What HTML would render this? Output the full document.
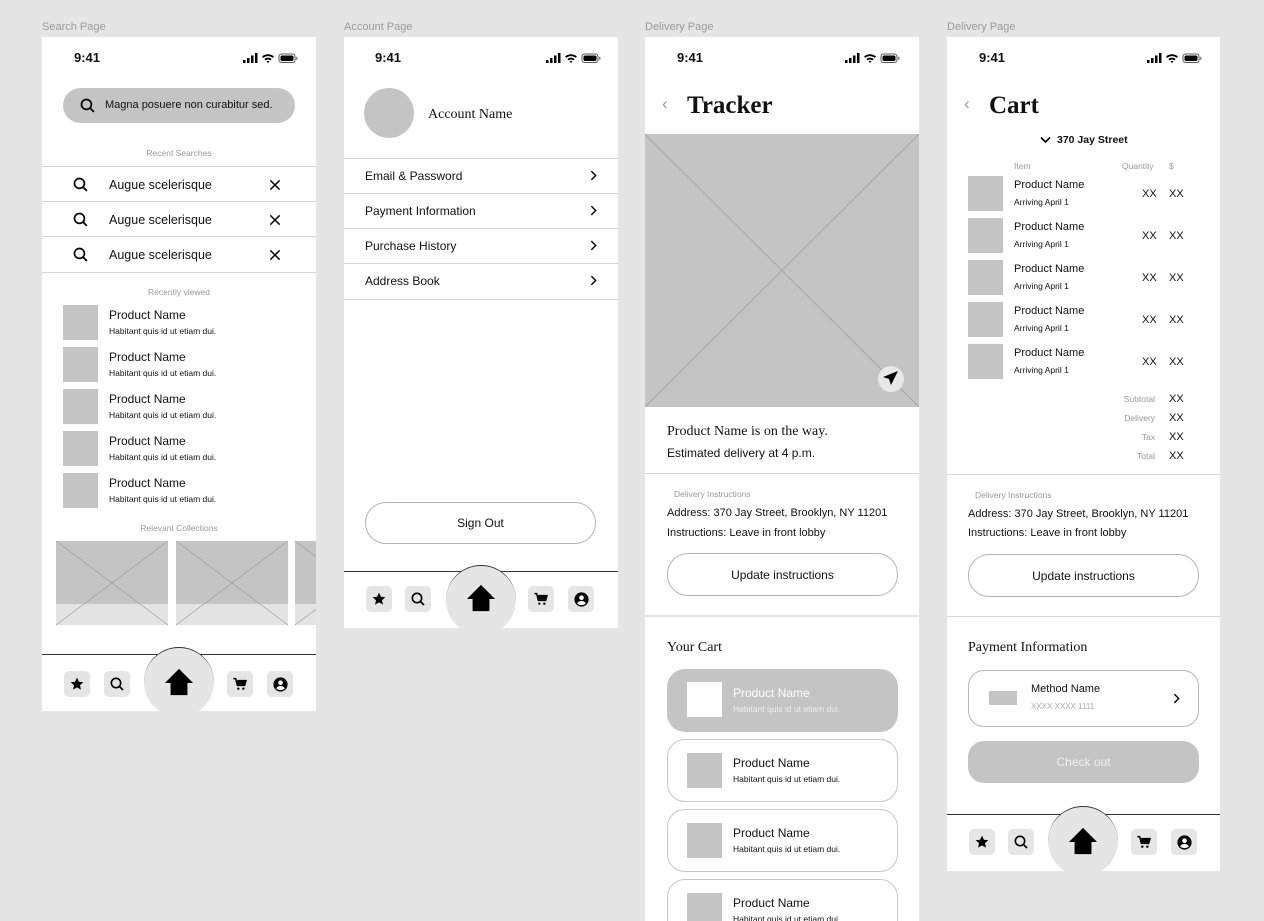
<!DOCTYPE html>
<html><head><meta charset="utf-8"><style>
*{margin:0;padding:0;box-sizing:border-box}
body{width:1264px;height:921px;background:#e5e5e5;position:relative;overflow:hidden;font-family:"Liberation Sans",sans-serif;color:#111}
.a{position:absolute}
.f{position:absolute;background:#fff;overflow:hidden}
.t{position:absolute;white-space:nowrap;line-height:1}
.lbl{position:absolute;font-size:11px;color:#9a9a9a;line-height:1}
.g{color:#999}
.sr{font-family:"Liberation Serif",serif}
.hl{position:absolute;height:1px;background:#d6d6d6}
.th{position:absolute;background:#c4c4c4;width:35px;height:35px}
.btn{position:absolute;border:1px solid #b5b5b5;border-radius:21px;display:flex;align-items:center;justify-content:center;font-size:12px}
.ib{position:absolute;width:26px;height:26px;background:#e5e5e5;border-radius:5px;display:flex;align-items:center;justify-content:center}
.circ{position:absolute;width:70px;height:70px;border-radius:50%;background:#e5e5e5;border-top:1px solid #333;display:flex;align-items:center;justify-content:center}
.nl{position:absolute;height:1px;background:#333}
</style></head><body>

<svg width="0" height="0" style="position:absolute">
<defs>
<symbol id="star" viewBox="0 0 24 24"><path d="M12 2.5l2.9 6.1 6.6.7-5 4.5 1.4 6.6L12 17l-5.9 3.4 1.4-6.6-5-4.5 6.6-.7z" fill="#000"/></symbol>
<symbol id="srch" viewBox="0 0 24 24"><circle cx="10.5" cy="10.5" r="7" fill="none" stroke="#000" stroke-width="2.4"/><path d="M15.5 15.5l5.5 5.5" stroke="#000" stroke-width="2.6"/></symbol>
<symbol id="cart" viewBox="0 0 24 24"><path d="M2 4h3.5l2.5 10h11l2-7H8" fill="none" stroke="#000" stroke-width="2.2"/><rect x="7.5" y="7" width="12" height="6" fill="#000"/><circle cx="9.5" cy="19" r="1.8" fill="#000"/><circle cx="17" cy="19" r="1.8" fill="#000"/></symbol>
<symbol id="user" viewBox="0 0 24 24"><circle cx="12" cy="12" r="10" fill="#000"/><circle cx="12" cy="9.5" r="3.3" fill="#fff"/><path d="M5.8 17.5c1.5-2.6 3.6-3.4 6.2-3.4s4.7.8 6.2 3.4c-1.6 1.6-3.8 2.5-6.2 2.5s-4.6-.9-6.2-2.5z" fill="#fff"/></symbol>
<symbol id="home" viewBox="0 0 32 32"><path d="M16 2L1 17h6v13h18V17h6z" fill="#000"/></symbol>
<symbol id="x" viewBox="0 0 24 24"><path d="M5 5l14 14M19 5L5 19" stroke="#000" stroke-width="2.2"/></symbol>
<symbol id="chev" viewBox="0 0 24 24"><path d="M8 4l8 8-8 8" fill="none" stroke="#000" stroke-width="2.6"/></symbol>
<symbol id="status" viewBox="0 0 56 12"><rect x="0" y="8" width="2.5" height="3" fill="#000"/><rect x="4" y="6" width="2.5" height="5" fill="#000"/><rect x="8" y="3.5" width="2.5" height="7.5" fill="#000"/><rect x="12" y="1" width="2.5" height="10" fill="#000"/><path d="M19 4.5a9 9 0 0 1 12 0l-1.3 1.4a7 7 0 0 0-9.4 0z M21.3 7a5.5 5.5 0 0 1 7.4 0l-1.3 1.4a3.6 3.6 0 0 0-4.8 0z M23.6 9.5a2 2 0 0 1 2.8 0L25 11z" fill="#000"/><rect x="36" y="2" width="16" height="8.5" rx="2.5" fill="none" stroke="#555" stroke-width="1"/><rect x="37.5" y="3.5" width="13" height="5.5" rx="1.5" fill="#000"/><rect x="53" y="4.8" width="1.5" height="3" fill="#888"/></symbol>
</defs></svg>

<!-- SEARCH PAGE -->
<div class="lbl" style="left:42px;top:22px">Search Page</div>
<div class="f" style="left:42px;top:37px;width:274px;height:674px">
  <div class="t" style="left:32px;top:14px;font-size:13px;font-weight:bold">9:41</div>
  <svg class="a" style="left:201px;top:15px" width="56" height="12"><use href="#status"/></svg>
  <div class="a" style="left:21px;top:51px;width:232px;height:35px;background:#c4c4c4;border-radius:18px"></div>
  <svg class="a" style="left:37px;top:60px" width="17" height="17"><use href="#srch"/></svg>
  <div class="t" style="left:63px;top:63px;font-size:11px">Magna posuere non curabitur sed.</div>
  <div class="t g" style="left:0;width:274px;text-align:center;top:112px;font-size:8.5px">Recent Searches</div>
  <div class="hl" style="left:0;width:274px;top:129px"></div>
  <div class="hl" style="left:0;width:274px;top:164px"></div>
  <div class="hl" style="left:0;width:274px;top:199px"></div>
  <div class="hl" style="left:0;width:274px;top:235px"></div>
  <svg class="a" style="left:30px;top:139px" width="17" height="17"><use href="#srch"/></svg>
  <svg class="a" style="left:30px;top:174px" width="17" height="17"><use href="#srch"/></svg>
  <svg class="a" style="left:30px;top:209px" width="17" height="17"><use href="#srch"/></svg>
  <div class="t" style="left:67px;top:142px;font-size:12.5px">Augue scelerisque</div>
  <div class="t" style="left:67px;top:177px;font-size:12.5px">Augue scelerisque</div>
  <div class="t" style="left:67px;top:212px;font-size:12.5px">Augue scelerisque</div>
  <svg class="a" style="left:225px;top:140px" width="16" height="16"><use href="#x"/></svg>
  <svg class="a" style="left:225px;top:175px" width="16" height="16"><use href="#x"/></svg>
  <svg class="a" style="left:225px;top:210px" width="16" height="16"><use href="#x"/></svg>
  <div class="t g" style="left:0;width:274px;text-align:center;top:251px;font-size:8.5px">Recently viewed</div>
  <div class="th" style="left:21px;top:268px"></div>
  <div class="th" style="left:21px;top:310px"></div>
  <div class="th" style="left:21px;top:352px"></div>
  <div class="th" style="left:21px;top:394px"></div>
  <div class="th" style="left:21px;top:436px"></div>
  <div class="t" style="left:67px;top:272px;font-size:12px">Product Name</div><div class="t" style="left:67px;top:290px;font-size:8.5px">Habitant quis id ut etiam dui.</div>
  <div class="t" style="left:67px;top:314px;font-size:12px">Product Name</div><div class="t" style="left:67px;top:332px;font-size:8.5px">Habitant quis id ut etiam dui.</div>
  <div class="t" style="left:67px;top:356px;font-size:12px">Product Name</div><div class="t" style="left:67px;top:374px;font-size:8.5px">Habitant quis id ut etiam dui.</div>
  <div class="t" style="left:67px;top:398px;font-size:12px">Product Name</div><div class="t" style="left:67px;top:416px;font-size:8.5px">Habitant quis id ut etiam dui.</div>
  <div class="t" style="left:67px;top:440px;font-size:12px">Product Name</div><div class="t" style="left:67px;top:458px;font-size:8.5px">Habitant quis id ut etiam dui.</div>
  <div class="t g" style="left:0;width:274px;text-align:center;top:487px;font-size:8.5px">Relevant Collections</div>
  <svg class="a" style="left:14px;top:504px" width="260" height="85">
    <g><rect x="0" y="0" width="112" height="84" fill="#e3e3e3"/><rect x="0" y="0" width="112" height="63" fill="#c4c4c4"/><path d="M0 0L112 84M112 0L0 84" stroke="#999" stroke-width=".6"/></g>
    <g transform="translate(120 0)"><rect x="0" y="0" width="112" height="84" fill="#e3e3e3"/><rect x="0" y="0" width="112" height="63" fill="#c4c4c4"/><path d="M0 0L112 84M112 0L0 84" stroke="#999" stroke-width=".6"/></g>
    <g transform="translate(239 0)"><rect x="0" y="0" width="112" height="84" fill="#e3e3e3"/><rect x="0" y="0" width="112" height="63" fill="#c4c4c4"/><path d="M0 0L112 84M112 0L0 84" stroke="#999" stroke-width=".6"/></g>
  </svg>
  <div class="nl" style="left:0;width:274px;top:617px"></div>
  <div class="ib" style="left:22px;top:634px"><svg width="16" height="16"><use href="#star"/></svg></div>
  <div class="ib" style="left:62px;top:634px"><svg width="16" height="16"><use href="#srch"/></svg></div>
  <div class="circ" style="left:102px;top:610px"><svg width="32" height="30" style="margin-top:-2px"><use href="#home"/></svg></div>
  <div class="ib" style="left:185px;top:634px"><svg width="16" height="16"><use href="#cart"/></svg></div>
  <div class="ib" style="left:225px;top:634px"><svg width="17" height="17"><use href="#user"/></svg></div>
</div>

<!-- ACCOUNT PAGE -->
<div class="lbl" style="left:344px;top:22px">Account Page</div>
<div class="f" style="left:344px;top:37px;width:274px;height:591px">
  <div class="t" style="left:31px;top:14px;font-size:13px;font-weight:bold">9:41</div>
  <svg class="a" style="left:202px;top:15px" width="56" height="12"><use href="#status"/></svg>
  <div class="a" style="left:20px;top:51px;width:50px;height:50px;border-radius:50%;background:#c4c4c4"></div>
  <div class="t sr" style="left:84px;top:71px;font-size:14px">Account Name</div>
  <div class="hl" style="left:0;width:274px;top:121px"></div>
  <div class="hl" style="left:0;width:274px;top:156px"></div>
  <div class="hl" style="left:0;width:274px;top:191px"></div>
  <div class="hl" style="left:0;width:274px;top:226px"></div>
  <div class="hl" style="left:0;width:274px;top:262px"></div>
  <div class="t" style="left:21px;top:133px;font-size:12px">Email &amp; Password</div>
  <div class="t" style="left:21px;top:168px;font-size:12px">Payment Information</div>
  <div class="t" style="left:21px;top:203px;font-size:12px">Purchase History</div>
  <div class="t" style="left:21px;top:238px;font-size:12px">Address Book</div>
  <svg class="a" style="left:243px;top:132px" width="13" height="13"><use href="#chev"/></svg>
  <svg class="a" style="left:243px;top:167px" width="13" height="13"><use href="#chev"/></svg>
  <svg class="a" style="left:243px;top:202px" width="13" height="13"><use href="#chev"/></svg>
  <svg class="a" style="left:243px;top:237px" width="13" height="13"><use href="#chev"/></svg>
  <div class="btn" style="left:21px;top:465px;width:231px;height:42px">Sign Out</div>
  <div class="nl" style="left:0;width:274px;top:534px"></div>
  <div class="ib" style="left:22px;top:549px"><svg width="16" height="16"><use href="#star"/></svg></div>
  <div class="ib" style="left:61px;top:549px"><svg width="16" height="16"><use href="#srch"/></svg></div>
  <div class="circ" style="left:102px;top:528px"><svg width="32" height="30" style="margin-top:-6px"><use href="#home"/></svg></div>
  <div class="ib" style="left:184px;top:549px"><svg width="16" height="16"><use href="#cart"/></svg></div>
  <div class="ib" style="left:224px;top:549px"><svg width="17" height="17"><use href="#user"/></svg></div>
</div>

<!-- DELIVERY PAGE -->
<div class="lbl" style="left:645px;top:22px">Delivery Page</div>
<div class="f" style="left:645px;top:37px;width:274px;height:884px">
  <div class="t" style="left:32px;top:14px;font-size:13px;font-weight:bold">9:41</div>
  <svg class="a" style="left:200px;top:15px" width="56" height="12"><use href="#status"/></svg>
  <div class="t g" style="left:17px;top:58px;font-size:17px">‹</div>
  <div class="t sr" style="left:42px;top:56px;font-size:25px;font-weight:bold">Tracker</div>
  <svg class="a" style="left:0;top:97px" width="274" height="273"><rect width="274" height="273" fill="#c4c4c4"/><path d="M0 0L274 273M274 0L0 273" stroke="#999" stroke-width=".7"/><circle cx="246" cy="245" r="13" fill="#e8e8e8"/><path d="M253 237l-15 6 6 2 2 6z" fill="#000"/></svg>
  <div class="t sr" style="left:22px;top:388px;font-size:14px">Product Name is on the way.</div>
  <div class="t" style="left:22px;top:410px;font-size:12px">Estimated delivery at 4 p.m.</div>
  <div class="hl" style="left:0;width:274px;top:436px"></div>
  <div class="t g" style="left:29px;top:453px;font-size:8.5px">Delivery Instructions</div>
  <div class="t" style="left:22px;top:471px;font-size:11px">Address: 370 Jay Street, Brooklyn, NY 11201</div>
  <div class="t" style="left:22px;top:491px;font-size:11px">Instructions: Leave in front lobby</div>
  <div class="btn" style="left:22px;top:516px;width:231px;height:43px">Update instructions</div>
  <div class="a" style="left:0;width:274px;top:578px;height:2px;background:#e3e3e3"></div>
  <div class="t sr" style="left:22px;top:604px;font-size:14px">Your Cart</div>
  <div class="a" style="left:22px;top:632px;width:231px;height:63px;border-radius:18px;background:#c4c4c4"></div>
  <div class="a" style="left:42px;top:645px;width:35px;height:35px;background:#fff"></div>
  <div class="t" style="left:88px;top:650px;font-size:12px;color:#fff">Product Name</div>
  <div class="t" style="left:88px;top:668px;font-size:8.5px;color:#eee">Habitant quis id ut etiam dui.</div>
  <div class="a" style="left:22px;top:702px;width:231px;height:63px;border-radius:18px;border:1px solid #c8c8c8"></div>
  <div class="th" style="left:42px;top:716px"></div>
  <div class="t" style="left:88px;top:720px;font-size:12px">Product Name</div>
  <div class="t" style="left:88px;top:738px;font-size:8.5px">Habitant quis id ut etiam dui.</div>
  <div class="a" style="left:22px;top:772px;width:231px;height:63px;border-radius:18px;border:1px solid #c8c8c8"></div>
  <div class="th" style="left:42px;top:786px"></div>
  <div class="t" style="left:88px;top:790px;font-size:12px">Product Name</div>
  <div class="t" style="left:88px;top:808px;font-size:8.5px">Habitant quis id ut etiam dui.</div>
  <div class="a" style="left:22px;top:842px;width:231px;height:63px;border-radius:18px;border:1px solid #c8c8c8"></div>
  <div class="th" style="left:42px;top:856px"></div>
  <div class="t" style="left:88px;top:860px;font-size:12px">Product Name</div>
  <div class="t" style="left:88px;top:878px;font-size:8.5px">Habitant quis id ut etiam dui.</div>
</div>

<!-- CART PAGE -->
<div class="lbl" style="left:947px;top:22px">Delivery Page</div>
<div class="f" style="left:947px;top:37px;width:273px;height:834px">
  <div class="t" style="left:32px;top:14px;font-size:13px;font-weight:bold">9:41</div>
  <svg class="a" style="left:200px;top:15px" width="56" height="12"><use href="#status"/></svg>
  <div class="t g" style="left:17px;top:58px;font-size:17px">‹</div>
  <div class="t sr" style="left:42px;top:56px;font-size:25px;font-weight:bold">Cart</div>
  <svg class="a" style="left:93px;top:99px" width="11" height="8"><path d="M1 1.5l4.5 4.5 4.5-4.5" fill="none" stroke="#000" stroke-width="1.6"/></svg>
  <div class="t" style="left:110px;top:98px;font-size:10.5px;font-weight:bold">370 Jay Street</div>
  <div class="t g" style="left:67px;top:125px;font-size:8.5px">Item</div>
  <div class="t g" style="left:175px;top:125px;font-size:8.5px">Quantity</div>
  <div class="t g" style="left:222px;top:125px;font-size:8.5px">$</div>
  <div class="th" style="left:21px;top:139px"></div>
  <div class="th" style="left:21px;top:181px"></div>
  <div class="th" style="left:21px;top:223px"></div>
  <div class="th" style="left:21px;top:265px"></div>
  <div class="th" style="left:21px;top:307px"></div>
  <div class="t" style="left:67px;top:143px;font-size:11px">Product Name</div><div class="t" style="left:67px;top:161px;font-size:8.5px">Arriving April 1</div><div class="t" style="left:195px;top:152px;font-size:11px">XX</div><div class="t" style="left:222px;top:152px;font-size:11px">XX</div>
  <div class="t" style="left:67px;top:185px;font-size:11px">Product Name</div><div class="t" style="left:67px;top:203px;font-size:8.5px">Arriving April 1</div><div class="t" style="left:195px;top:194px;font-size:11px">XX</div><div class="t" style="left:222px;top:194px;font-size:11px">XX</div>
  <div class="t" style="left:67px;top:227px;font-size:11px">Product Name</div><div class="t" style="left:67px;top:245px;font-size:8.5px">Arriving April 1</div><div class="t" style="left:195px;top:236px;font-size:11px">XX</div><div class="t" style="left:222px;top:236px;font-size:11px">XX</div>
  <div class="t" style="left:67px;top:269px;font-size:11px">Product Name</div><div class="t" style="left:67px;top:287px;font-size:8.5px">Arriving April 1</div><div class="t" style="left:195px;top:278px;font-size:11px">XX</div><div class="t" style="left:222px;top:278px;font-size:11px">XX</div>
  <div class="t" style="left:67px;top:311px;font-size:11px">Product Name</div><div class="t" style="left:67px;top:329px;font-size:8.5px">Arriving April 1</div><div class="t" style="left:195px;top:320px;font-size:11px">XX</div><div class="t" style="left:222px;top:320px;font-size:11px">XX</div>
  <div class="t g" style="left:120px;width:88px;text-align:right;top:358px;font-size:8.5px">Subtotal</div><div class="t" style="left:222px;top:357px;font-size:11px">XX</div>
  <div class="t g" style="left:120px;width:88px;text-align:right;top:377px;font-size:8.5px">Delivery</div><div class="t" style="left:222px;top:376px;font-size:11px">XX</div>
  <div class="t g" style="left:120px;width:88px;text-align:right;top:396px;font-size:8.5px">Tax</div><div class="t" style="left:222px;top:395px;font-size:11px">XX</div>
  <div class="t g" style="left:120px;width:88px;text-align:right;top:415px;font-size:8.5px">Total</div><div class="t" style="left:222px;top:414px;font-size:11px">XX</div>
  <div class="hl" style="left:0;width:273px;top:437px"></div>
  <div class="t g" style="left:28px;top:454px;font-size:8.5px">Delivery Instructions</div>
  <div class="t" style="left:21px;top:472px;font-size:11px">Address: 370 Jay Street, Brooklyn, NY 11201</div>
  <div class="t" style="left:21px;top:491px;font-size:11px">Instructions: Leave in front lobby</div>
  <div class="btn" style="left:21px;top:517px;width:231px;height:43px">Update instructions</div>
  <div class="hl" style="left:0;width:273px;top:579px"></div>
  <div class="t sr" style="left:21px;top:604px;font-size:14px">Payment Information</div>
  <div class="a" style="left:21px;top:633px;width:231px;height:57px;border-radius:16px;border:1px solid #b8b8b8"></div>
  <div class="a" style="left:42px;top:654px;width:28px;height:14px;background:#c4c4c4"></div>
  <div class="t" style="left:84px;top:647px;font-size:11px">Method Name</div>
  <div class="t g" style="left:84px;top:666px;font-size:8px;color:#aaa">XXXX XXXX 1111</div>
  <svg class="a" style="left:223px;top:655px" width="13" height="13"><use href="#chev"/></svg>
  <div class="a" style="left:21px;top:704px;width:231px;height:42px;border-radius:16px;background:#c4c4c4;color:#eee;font-size:12px;display:flex;align-items:center;justify-content:center">Check out</div>
  <div class="nl" style="left:0;width:273px;top:777px"></div>
  <div class="ib" style="left:22px;top:792px"><svg width="16" height="16"><use href="#star"/></svg></div>
  <div class="ib" style="left:61px;top:792px"><svg width="16" height="16"><use href="#srch"/></svg></div>
  <div class="circ" style="left:101px;top:769px"><svg width="32" height="30" style="margin-top:-2px"><use href="#home"/></svg></div>
  <div class="ib" style="left:184px;top:792px"><svg width="16" height="16"><use href="#cart"/></svg></div>
  <div class="ib" style="left:224px;top:792px"><svg width="17" height="17"><use href="#user"/></svg></div>
</div>
</body></html>
